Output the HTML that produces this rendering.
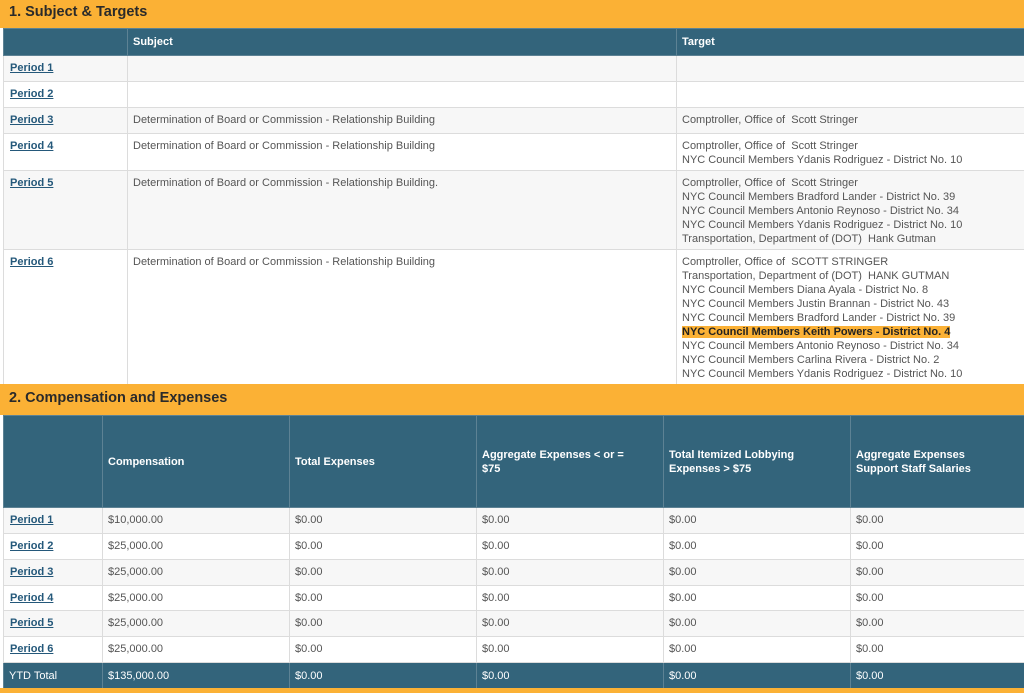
<!DOCTYPE html>
<html><head><meta charset="utf-8"><style>
*{margin:0;padding:0;box-sizing:border-box}
body{width:1024px;height:693px;overflow:hidden;background:#fff;font-family:"Liberation Sans",Arial,sans-serif;font-size:11px;color:#555}
.bar{position:absolute;left:0;width:1024px;background:#fbb135;color:#2a2a2a;font-weight:bold;font-size:14.5px;padding-left:9px}
table{position:absolute;left:3px;width:1021px;border-collapse:collapse;table-layout:fixed}
td,th{border:1px solid #dcdcdc;vertical-align:top;padding:5px 5px 0 5px;line-height:14px;text-align:left}
th{background:#33647b;color:#fff;font-weight:bold;border-color:#5d8294}
tr.g td{background:#f7f7f7}
a{color:#24587a;font-weight:bold;text-decoration:underline}
td.p{padding-left:6px}
.hl{background:#fbb135;color:#222;font-weight:bold}
#t2 th{vertical-align:middle;padding-top:0}
tr.tot td{background:#33647b;color:#fff;border-color:#5d8294;vertical-align:middle;padding-top:0}
</style></head><body>
<div class="bar" style="top:0;height:28px;line-height:24px">1. Subject &amp; Targets</div>
<table style="top:28px">
<colgroup><col style="width:124px"><col style="width:549px"><col style="width:348px"></colgroup>
<tr style="height:27px"><th></th><th style="vertical-align:middle;padding-top:0">Subject</th><th style="vertical-align:middle;padding-top:0">Target</th></tr>
<tr class="g" style="height:26px"><td class="p"><a>Period 1</a></td><td></td><td></td></tr>
<tr style="height:26px"><td class="p"><a>Period 2</a></td><td></td><td></td></tr>
<tr class="g" style="height:26px"><td class="p"><a>Period 3</a></td><td>Determination of Board or Commission - Relationship Building</td><td>Comptroller, Office of &nbsp;Scott Stringer</td></tr>
<tr style="height:37px"><td class="p"><a>Period 4</a></td><td>Determination of Board or Commission - Relationship Building</td><td>Comptroller, Office of &nbsp;Scott Stringer<br>NYC Council Members Ydanis Rodriguez - District No. 10</td></tr>
<tr class="g" style="height:79px"><td class="p"><a>Period 5</a></td><td>Determination of Board or Commission - Relationship Building.</td><td>Comptroller, Office of &nbsp;Scott Stringer<br>NYC Council Members Bradford Lander - District No. 39<br>NYC Council Members Antonio Reynoso - District No. 34<br>NYC Council Members Ydanis Rodriguez - District No. 10<br>Transportation, Department of (DOT) &nbsp;Hank Gutman</td></tr>
<tr style="height:135px"><td class="p"><a>Period 6</a></td><td>Determination of Board or Commission - Relationship Building</td><td>Comptroller, Office of &nbsp;SCOTT STRINGER<br>Transportation, Department of (DOT) &nbsp;HANK GUTMAN<br>NYC Council Members Diana Ayala - District No. 8<br>NYC Council Members Justin Brannan - District No. 43<br>NYC Council Members Bradford Lander - District No. 39<br><span class="hl">NYC Council Members Keith Powers - District No. 4</span><br>NYC Council Members Antonio Reynoso - District No. 34<br>NYC Council Members Carlina Rivera - District No. 2<br>NYC Council Members Ydanis Rodriguez - District No. 10</td></tr>
</table>
<div class="bar" style="top:384px;height:31px;line-height:29px">2. Compensation and Expenses</div>
<table id="t2" style="top:415px">
<colgroup><col style="width:99px"><col style="width:187px"><col style="width:187px"><col style="width:187px"><col style="width:187px"><col style="width:174px"></colgroup>
<tr style="height:92px"><th></th><th>Compensation</th><th>Total Expenses</th><th>Aggregate Expenses &lt; or =<br>$75</th><th>Total Itemized Lobbying<br>Expenses &gt; $75</th><th>Aggregate Expenses<br>Support Staff Salaries</th></tr>
<tr class="g" style="height:26px"><td class="p"><a>Period 1</a></td><td>$10,000.00</td><td>$0.00</td><td>$0.00</td><td>$0.00</td><td>$0.00</td></tr>
<tr style="height:26px"><td class="p"><a>Period 2</a></td><td>$25,000.00</td><td>$0.00</td><td>$0.00</td><td>$0.00</td><td>$0.00</td></tr>
<tr class="g" style="height:26px"><td class="p"><a>Period 3</a></td><td>$25,000.00</td><td>$0.00</td><td>$0.00</td><td>$0.00</td><td>$0.00</td></tr>
<tr style="height:25px"><td class="p"><a>Period 4</a></td><td>$25,000.00</td><td>$0.00</td><td>$0.00</td><td>$0.00</td><td>$0.00</td></tr>
<tr class="g" style="height:26px"><td class="p"><a>Period 5</a></td><td>$25,000.00</td><td>$0.00</td><td>$0.00</td><td>$0.00</td><td>$0.00</td></tr>
<tr style="height:26px"><td class="p"><a>Period 6</a></td><td>$25,000.00</td><td>$0.00</td><td>$0.00</td><td>$0.00</td><td>$0.00</td></tr>
<tr class="tot" style="height:26px"><td>YTD Total</td><td>$135,000.00</td><td>$0.00</td><td>$0.00</td><td>$0.00</td><td>$0.00</td></tr>
</table>
<div class="bar" style="top:688px;height:5px"></div>
</body></html>
